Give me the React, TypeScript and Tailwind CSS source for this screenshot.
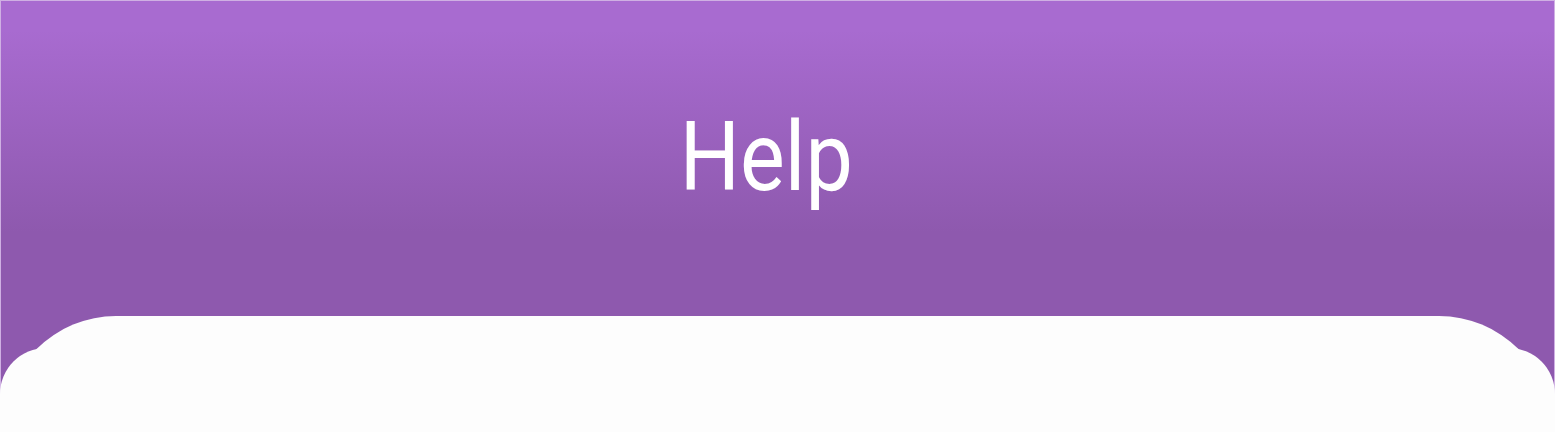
export default function App() {
  return (
    <div className="w-[1555px] h-[432px] overflow-hidden shadow-[inset_0_0_0_1px_#cfb0e3] bg-[linear-gradient(to_bottom,#a86bd0_30px,#8e59ae_232px)] flex flex-col font-['Roboto',sans-serif]">
      {/* Title */}
      <div className="h-[316px] shrink-0 flex justify-center pt-[109px] pr-[22px]">
        <h1 className="text-[96px] leading-none font-normal text-white scale-x-[0.88]">Help</h1>
      </div>

      {/* Content card with stacked top shapes */}
      <div className="grid flex-1">
        <div className="col-start-1 row-start-1 mt-[32px] bg-[#fdfdfd] rounded-t-[46px]" />
        <div className="col-start-1 row-start-1 mx-[4px] bg-[#fdfdfd] rounded-t-[112px]" />
      </div>
    </div>
  );
}
